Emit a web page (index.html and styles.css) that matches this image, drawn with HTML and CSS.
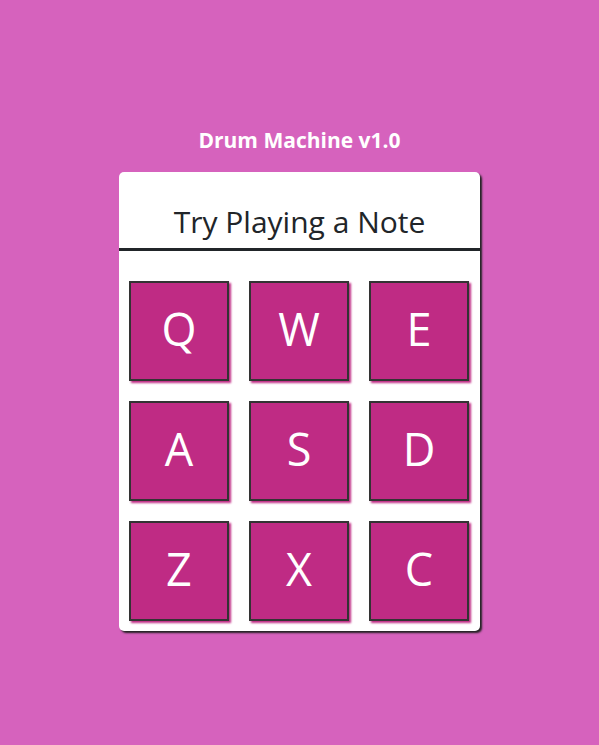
FILE: index.html
```html
<!DOCTYPE html>
<html>
<head>
<meta charset="utf-8">
<link rel="stylesheet" href="styles.css">
</head>
<body>
<main class="page">
  <h1 class="app-title">Drum Machine v1.0</h1>
  <section class="machine">
    <div class="display">Try Playing a Note</div>
    <div class="pads">
      <div class="pad">Q</div>
      <div class="pad">W</div>
      <div class="pad">E</div>
      <div class="pad">A</div>
      <div class="pad">S</div>
      <div class="pad">D</div>
      <div class="pad">Z</div>
      <div class="pad">X</div>
      <div class="pad">C</div>
    </div>
  </section>
</main>
</body>
</html>
```
FILE: styles.css
```css
html, body {
  margin: 0;
  padding: 0;
  background: #d662bd;
  height: 100%;
}
body {
  font-family: "Open Sans", "Noto Sans", sans-serif;
}
.page {
  display: flex;
  flex-direction: column;
  align-items: center;
  padding-top: 125px;
}
.app-title {
  margin: 0;
  color: #fff;
  font-family: "Open Sans", sans-serif;
  font-size: 21px;
  font-weight: 700;
  line-height: 30px;
  height: 30px;
}
.machine {
  margin-top: 17px;
  width: 361px;
  background: #fff;
  border-radius: 5px;
  box-shadow: 2px 2px 2px #222;
  padding-bottom: 10px;
}
.display {
  height: 79px;
  box-sizing: border-box;
  padding-top: 30px;
  text-align: center;
  font-size: 30px;
  line-height: 40px;
  color: #212529;
  border-bottom: 3px solid #212529;
}
.pads {
  display: grid;
  grid-template-columns: repeat(3, 100px);
  gap: 20px;
  padding: 30px 10px 0 10px;
}
.pad {
  box-sizing: border-box;
  width: 100px;
  height: 100px;
  padding-bottom: 6px;
  background: #bf2b84;
  border: 2px solid #333;
  box-shadow: 2px 2px 2px #bf2b84;
  color: #fff;
  font-size: 45px;
  display: flex;
  align-items: center;
  justify-content: center;
}
```
